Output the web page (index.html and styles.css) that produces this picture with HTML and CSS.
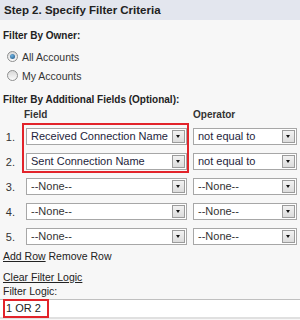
FILE: index.html
```html
<!DOCTYPE html>
<html lang="en">
<head>
    <meta charset="UTF-8">
    <meta name="viewport" content="width=device-width, initial-scale=1.0">
    <title>Step 2. Specify Filter Criteria</title>
    <link rel="stylesheet" href="styles.css">
</head>
<body>
    <div class="panel">
        <div class="step-head">Step 2. Specify Filter Criteria</div>

        <div class="label owner-label">Filter By Owner:</div>
        <div class="radio-row"><span class="radio checked"></span>All Accounts</div>
        <div class="radio-row"><span class="radio"></span>My Accounts</div>

        <div class="label extra-label">Filter By Additional Fields (Optional):</div>

        <div class="filters">
            <div></div>
            <div class="col-head field-head">Field</div>
            <div class="col-head">Operator</div>

            <div class="num">1.</div>
            <div class="select">Received Connection Name<span class="arrow"></span></div>
            <div class="select">not equal to<span class="arrow"></span></div>

            <div class="num">2.</div>
            <div class="select">Sent Connection Name<span class="arrow"></span></div>
            <div class="select">not equal to<span class="arrow"></span></div>

            <div class="num">3.</div>
            <div class="select none">--None--<span class="arrow"></span></div>
            <div class="select none">--None--<span class="arrow"></span></div>

            <div class="num">4.</div>
            <div class="select none">--None--<span class="arrow"></span></div>
            <div class="select none">--None--<span class="arrow"></span></div>

            <div class="num">5.</div>
            <div class="select none">--None--<span class="arrow"></span></div>
            <div class="select none">--None--<span class="arrow"></span></div>

            <!-- annotation box around the two chosen fields -->
            <div class="mark field-mark"></div>
        </div>

        <div class="row-links"><a href="#">Add Row</a> Remove Row</div>

        <div class="logic-link"><a href="#">Clear Filter Logic</a></div>
        <div class="logic-label">Filter Logic:</div>
        <div class="logic-input">
            1 OR 2
            <div class="mark logic-mark"></div>
        </div>
    </div>
</body>
</html>
```

FILE: styles.css
```css
body {
    margin: 0;
    font-family: "Liberation Sans", Arial, sans-serif;
    background: #f7f7f7;
    color: #222;
}
.panel {
    width: 300px;
    height: 320px;
    overflow: hidden;
    background: #f7f7f7;
}
.step-head {
    height: 20px;
    line-height: 20px;
    padding-left: 4px;
    background: #e3e6ee;
    font-size: 11.5px;
    font-weight: bold;
    color: #222;
}
.label {
    font-size: 10px;
    font-weight: bold;
    line-height: 14px;
    padding-left: 3px;
    color: #222;
}
.owner-label {
    margin-top: 9px;
}
.radio-row {
    display: flex;
    align-items: center;
    gap: 4px;
    height: 19px;
    padding-left: 7px;
    font-size: 10.5px;
    color: #333;
}
.radio-row:first-of-type {
    margin-top: 4px;
}
.owner-label + .radio-row {
    margin-top: 4px;
}
.radio {
    width: 9px;
    height: 9px;
    border-radius: 50%;
    border: 1px solid #8e8f8f;
    background: linear-gradient(#d8d8d8, #fbfbfb);
    display: flex;
    align-items: center;
    justify-content: center;
}
.radio.checked::after {
    content: "";
    width: 5px;
    height: 5px;
    border-radius: 50%;
    background: radial-gradient(circle at 40% 35%, #6fb3e0, #1b4f80);
}
.extra-label {
    margin-top: 8px;
}
.filters {
    position: relative;
    display: grid;
    grid-template-columns: 20px 161px 104px;
    grid-auto-rows: 25px;
    grid-template-rows: 16px;
    column-gap: 6px;
    margin-top: 1px;
    align-items: center;
}
.col-head {
    font-size: 10px;
    font-weight: bold;
    color: #333;
    align-self: start;
    line-height: 14px;
}
.field-head {
    margin-left: -2px;
}
.num {
    text-align: right;
    padding-right: 5px;
    font-size: 11px;
    color: #333;
}
.select {
    position: relative;
    height: 17px;
    box-sizing: border-box;
    border: 1px solid #a7a7a7;
    background: #fff;
    font-size: 11px;
    line-height: 15px;
    padding-left: 4px;
    color: #1e1e3c;
    white-space: nowrap;
    overflow: hidden;
}
.select.none {
    color: #333;
}
.arrow {
    position: absolute;
    right: 1px;
    top: 1px;
    width: 13px;
    height: 13px;
    box-sizing: border-box;
    border: 1px solid #9c9c9c;
    background: linear-gradient(#f2f2f2, #dcdcdc);
}
.arrow::after {
    content: "";
    position: absolute;
    left: 3px;
    top: 4px;
    border-left: 2.5px solid transparent;
    border-right: 2.5px solid transparent;
    border-top: 3px solid #111;
}
.mark {
    position: absolute;
    box-sizing: border-box;
    border: 2px solid #e2232a;
}
.field-mark {
    left: 22px;
    top: 15px;
    width: 167px;
    height: 50px;
}
.row-links {
    font-size: 10.5px;
    line-height: 14px;
    padding-left: 3px;
    color: #222;
}
.row-links a,
.logic-link a {
    color: #222;
    text-decoration: underline;
}
.logic-link {
    margin-top: 7px;
    font-size: 10.5px;
    line-height: 14px;
    padding-left: 3px;
}
.logic-label {
    font-size: 10.5px;
    line-height: 14px;
    padding-left: 3px;
    color: #222;
}
.logic-input {
    position: relative;
    margin-top: 1px;
    height: 17px;
    line-height: 17px;
    padding-left: 6px;
    background: #fff;
    border-top: 1px solid #c0c0c0;
    border-bottom: 2px solid #e0e0e0;
    font-size: 11px;
    color: #222;
}
.logic-mark {
    left: 3px;
    top: -1px;
    width: 46px;
    height: 19px;
}
```
